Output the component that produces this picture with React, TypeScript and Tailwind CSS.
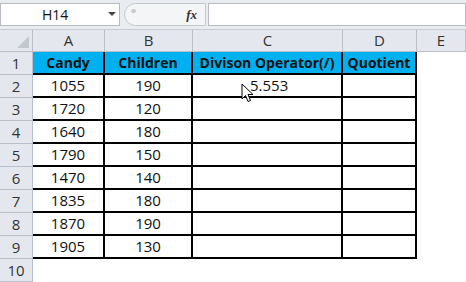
import React from "react";

const rows: [string, string][] = [
  ["1055", "190"],
  ["1720", "120"],
  ["1640", "180"],
  ["1790", "150"],
  ["1470", "140"],
  ["1835", "180"],
  ["1870", "190"],
  ["1905", "130"],
];

const font = { fontFamily: '"Open Sans", "Noto Sans", sans-serif' };

export default function App() {
  return (
    <div className="w-[466px] h-[282px] overflow-hidden bg-white relative" style={font}>
      {/* formula bar */}
      <div className="h-[30px] bg-[#e9ecf0] pt-[3px] border-b border-[#c8ccd2]">
        <div className="flex h-[23px] items-stretch">
          <div className="w-[120px] bg-white border border-[#b8bcc2] flex items-center relative">
            <span className="ml-[41px] text-[14px] text-[#111]">H14</span>
            <span className="absolute right-[3px] top-[8px] w-0 h-0 border-l-[4px] border-r-[4px] border-t-[4px] border-l-transparent border-r-transparent border-t-[#444]" />
          </div>
          <div className="w-[4px]" />
          <div className="w-[82px] bg-[#f4f5f7] border border-[#c4c8ce] rounded-l-full flex items-center justify-end pr-[8px] relative">
            <span className="absolute left-[6px] top-[5px] w-[5px] h-[4px] rounded-full bg-[#c8ccd2]" />
            <span className="italic font-bold text-[13px] text-[#333]" style={{ fontFamily: '"Liberation Serif", serif' }}>fx</span>
          </div>
          <div className="flex-1 bg-white border border-[#b8bcc2] ml-[2px]" />
        </div>
      </div>
      {/* grid */}
      <div className="grid grid-cols-[33px_72px_88px_150px_74px_1fr] text-[15px] text-[#111]">
        {/* column headers */}
        <div className="h-[22px] bg-[#e4e8ee] border-r border-b border-[#b9c0c9] relative">
          <svg className="absolute right-[3px] bottom-[3px]" width="12" height="12" viewBox="0 0 12 12"><path d="M12 0 L12 12 L0 12 Z" fill="#c3c8cf" /></svg>
        </div>
        {["A", "B", "C", "D", "E"].map((c) => (
          <div key={c} className="h-[22px] bg-[#e4e8ee] border-r border-b border-[#b9c0c9] flex items-center justify-center text-[#333] text-[15px]">
            {c}
          </div>
        ))}
        {/* row 1 */}
        <div className="h-[23px] bg-[#e4e8ee] border-r border-b border-[#b9c0c9] flex items-center justify-center text-[#333]">1</div>
        {["Candy", "Children", "Divison Operator(/)", "Quotient"].map((t) => (
          <div key={t} className="h-[23px] bg-[#00b0f0] border-b-2 border-r-2 border-black flex items-center justify-center font-bold text-[14px] text-[#111]">
            {t}
          </div>
        ))}
        <div className="h-[23px] bg-white" />
        {rows.map((r, idx) => (
          <React.Fragment key={idx}>
            <div className="h-[23px] bg-[#e4e8ee] border-r border-b border-[#b9c0c9] flex items-center justify-center text-[#333]">{idx + 2}</div>
            <div className="h-[23px] bg-white border-r-2 border-b-2 border-black flex items-center justify-center">{r[0]}</div>
            <div className="h-[23px] bg-white border-r-2 border-b-2 border-black flex items-center justify-center">{r[1]}</div>
            <div className="h-[23px] bg-white border-r-2 border-b-2 border-black flex items-center pl-[57px]">{idx === 0 ? "5.553" : ""}</div>
            <div className="h-[23px] bg-white border-r-2 border-b-2 border-black" />
            <div className="h-[23px] bg-white" />
          </React.Fragment>
        ))}
        <div className="h-[23px] bg-[#e4e8ee] border-r border-b border-[#b9c0c9] flex items-center justify-center text-[#333]">10</div>
        <div className="h-[23px] col-span-5 bg-white" />
      </div>
      {/* mouse cursor */}
      <svg className="absolute left-[241px] top-[83px]" width="14" height="20" viewBox="0 0 14 20">
        <path d="M1 1 L1 16 L4.5 12.5 L7 18.5 L9.5 17.5 L7 11.5 L12 11.5 Z" fill="white" stroke="black" strokeWidth="1" strokeLinejoin="round" />
      </svg>
    </div>
  );
}
